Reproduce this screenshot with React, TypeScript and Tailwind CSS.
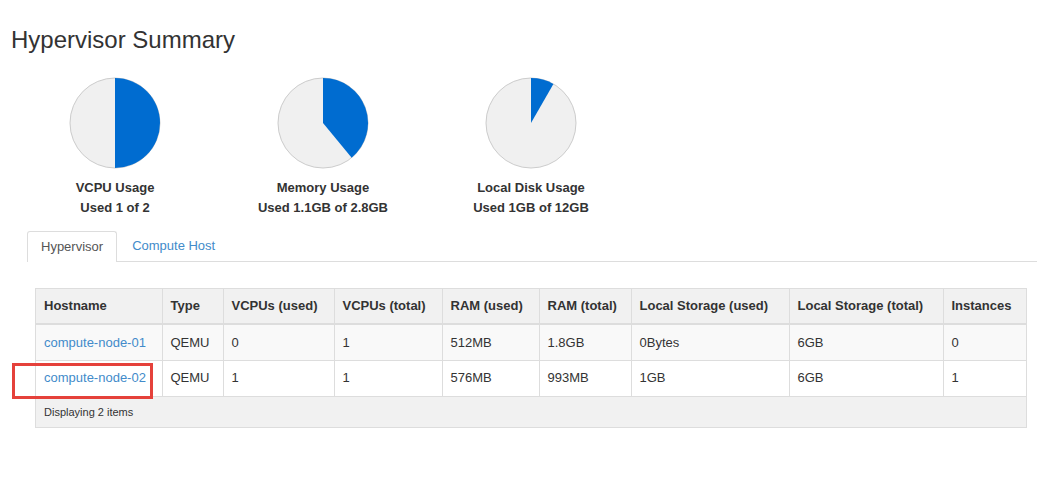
import React from "react";

type Pie = { label: string; used: string; fraction: number };

const pies: Pie[] = [
  { label: "VCPU Usage", used: "Used 1 of 2", fraction: 0.5 },
  { label: "Memory Usage", used: "Used 1.1GB of 2.8GB", fraction: 0.39 },
  { label: "Local Disk Usage", used: "Used 1GB of 12GB", fraction: 0.083 },
];

const columns = [
  { name: "Hostname", w: "w-[126px]" },
  { name: "Type", w: "w-[61px]" },
  { name: "VCPUs (used)", w: "w-[111px]" },
  { name: "VCPUs (total)", w: "w-[108px]" },
  { name: "RAM (used)", w: "w-[97px]" },
  { name: "RAM (total)", w: "w-[92px]" },
  { name: "Local Storage (used)", w: "w-[158px]" },
  { name: "Local Storage (total)", w: "w-[154px]" },
  { name: "Instances", w: "w-[83px]" },
];

const rows = [
  ["compute-node-01", "QEMU", "0", "1", "512MB", "1.8GB", "0Bytes", "6GB", "0"],
  ["compute-node-02", "QEMU", "1", "1", "576MB", "993MB", "1GB", "6GB", "1"],
];

function PieChart({ fraction }: { fraction: number }) {
  const r = 45;
  const cx = 46;
  const cy = 46;
  const a = fraction * 2 * Math.PI;
  const x = cx + r * Math.sin(a);
  const y = cy - r * Math.cos(a);
  const large = fraction > 0.5 ? 1 : 0;
  return (
    <svg width="92" height="92" viewBox="0 0 92 92">
      <circle cx={cx} cy={cy} r={r} fill="#f0f0f0" stroke="#cccccc" strokeWidth="1" />
      <path
        d={`M${cx} ${cy} L${cx} ${cy - r} A${r} ${r} 0 ${large} 1 ${x} ${y} Z`}
        fill="#006cd0"
      />
    </svg>
  );
}

export default function App() {
  return (
    <div
      className="relative w-[1054px] h-[499px] bg-white text-[#333] text-[13px] overflow-hidden"
      style={{ fontFamily: '"Liberation Sans", Arial, sans-serif' }}
    >
      {/* Title */}
      <h1 className="pl-[11px] pt-[25px] text-[24px] leading-[30px] font-normal">Hypervisor Summary</h1>

      {/* Pie charts */}
      <div className="flex pl-[11px] mt-[22px]">
        {pies.map((p) => (
          <div key={p.label} className="w-[208px] flex flex-col items-center">
            <PieChart fraction={p.fraction} />
            <div className="mt-[9px] font-bold leading-[20px] text-center">
              <div>{p.label}</div>
              <div>{p.used}</div>
            </div>
          </div>
        ))}
      </div>

      {/* Tabs */}
      <div className="ml-[27px] mr-[17px] mt-[13px] flex border-b border-[#ddd] h-[31px]">
        <div className="px-[13px] h-[31px] border border-b-0 border-[#ddd] rounded-t-[3px] bg-white text-[#555] leading-[29px] -mb-px">
          Hypervisor
        </div>
        <div className="ml-[2px] px-[13px] text-[#428bca] leading-[29px]">Compute Host</div>
      </div>

      {/* Table */}
      <div className="ml-[35px] mt-[26px] w-[992px] border border-[#ddd]">
        <table className="w-[990px] border-collapse table-fixed">
          <thead>
            <tr className="bg-[#f1f1f1] h-[35px]">
              {columns.map((c, i) => (
                <th
                  key={c.name}
                  className={`${c.w} text-left font-bold px-[8px] border-b-2 border-[#ddd] ${i > 0 ? "border-l" : ""}`}
                >
                  {c.name}
                </th>
              ))}
            </tr>
          </thead>
          <tbody>
            {rows.map((r, ri) => (
              <tr key={ri} className={`h-[36px] ${ri === 0 ? "bg-[#f9f9f9]" : "bg-white"}`}>
                {r.map((cell, ci) => (
                  <td
                    key={ci}
                    className={`px-[8px] border-b border-[#ddd] ${ci > 0 ? "border-l" : ""} ${ci === 0 ? "text-[#428bca]" : ""}`}
                  >
                    {cell}
                  </td>
                ))}
              </tr>
            ))}
          </tbody>
        </table>
        <div className="bg-[#f1f1f1] h-[30px] px-[8px] text-[11px] leading-[30px]">Displaying 2 items</div>
      </div>

      {/* Highlight box */}
      <div className="absolute left-[12px] top-[363px] w-[141px] h-[36px] border-[3px] border-[#e5413b]" />
    </div>
  );
}
